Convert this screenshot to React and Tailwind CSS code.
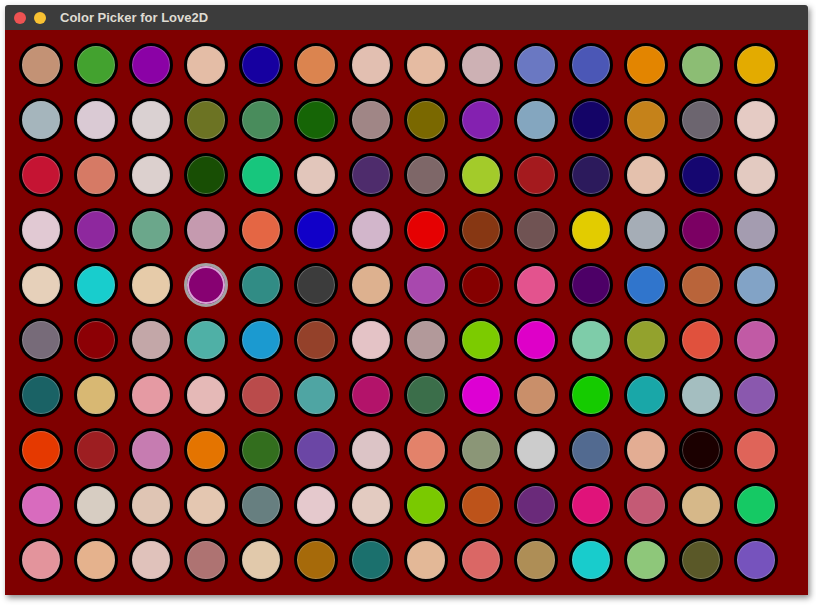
import React from 'react';

// 14 x 10 swatches, row by row
const COLORS = [
  ['#c39275', '#43a22f', '#8b02a6', '#e4bda6', '#1600a0', '#db844f', '#e2bfb1', '#e5bba2', '#cdb1b4', '#6a78c2', '#4b57b6', '#e38500', '#8cbd74', '#e3ab00'],
  ['#a5b5bc', '#dacad4', '#dad1d2', '#6c7323', '#498c5c', '#166506', '#a08686', '#7a6800', '#8421b0', '#84a6bf', '#140467', '#c5821a', '#6c656f', '#e5cbc4'],
  ['#c51433', '#d67a65', '#dcd0ce', '#184e04', '#17c67d', '#e2c6bb', '#4e2c6c', '#7e6768', '#a3cb2a', '#a41a1e', '#2c1a5c', '#e4c1ad', '#150670', '#e3cac1'],
  ['#e1c9d3', '#8e289e', '#6ba78b', '#c59aaf', '#e46644', '#1100c8', '#d2b6cb', '#e50102', '#873713', '#705353', '#e2cc00', '#a5adb6', '#7b0063', '#a49cb0'],
  ['#e6d0ba', '#18cdcd', '#e6cba9', '#870172', '#318c85', '#3c3c3c', '#ddb18f', '#a848ae', '#850000', '#e3538e', '#4d0067', '#3075cc', '#b9643a', '#82a3c6'],
  ['#776b79', '#8c0005', '#c3a7a8', '#4fb0a6', '#1b9ad0', '#94412a', '#e4c3c6', '#b2999a', '#7ccb00', '#de00c8', '#7ecca9', '#93a22d', '#e0513d', '#c15aa5'],
  ['#1a6265', '#d8b873', '#e59aa3', '#e5b9b7', '#ba4b4b', '#4fa5a3', '#b3136a', '#3b6e4a', '#dd00d3', '#c98f6a', '#15cb00', '#19a7a8', '#a4bec0', '#8a58ae'],
  ['#e53900', '#9d1e21', '#c67cb1', '#e47400', '#336e1e', '#6b46a5', '#dcc4c6', '#e3826a', '#8b9677', '#cccccc', '#526a90', '#e3ad93', '#1b0000', '#df6459'],
  ['#d86bbe', '#d7cdc2', '#dfc5b4', '#e4c7b1', '#677f80', '#e5c9cd', '#e3cbc1', '#7ac900', '#bd531a', '#6a2a7a', '#e0137a', '#c45a75', '#d6b889', '#15c964'],
  ['#e3949c', '#e5b28d', '#e0c2bb', '#ae7372', '#e1c9ab', '#a66a0a', '#1b706d', '#e3b897', '#da6765', '#ae8e56', '#18cccc', '#8ec77a', '#5a5828', '#7653bd'],
];

const SELECTED = [4, 3];

function Swatch({ color, selected }) {
  if (selected) {
    return (
      <div
        className="w-[44px] h-[44px] rounded-full border-[3px] border-[#a3a3a3] shadow-[inset_0_0_0_2px_#d9a3d6]"
        style={{ backgroundColor: color }}
      />
    );
  }
  return (
    <div
      className="w-[44px] h-[44px] rounded-full border-[3px] border-black shadow-[inset_0_0_0_1px_rgba(190,190,190,0.35)]"
      style={{ backgroundColor: color }}
    />
  );
}

export default function App() {
  return (
    <div className="w-[816px] h-[605px] bg-white pl-[5px] pt-[5px] overflow-hidden">
      <div className="w-[803px] h-[590px] flex flex-col shadow-[2px_3px_6px_rgba(0,0,0,0.45)]">
        <div className="h-[25px] bg-[#3c3c3c] flex items-center rounded-t-[3px]">
          <span className="ml-[9px] w-[12px] h-[12px] rounded-full bg-[#ee5252]" />
          <span className="ml-[8px] w-[12px] h-[12px] rounded-full bg-[#f8c132]" />
          <span
            className="ml-[14px] text-[13px] font-bold text-[#dfdbd2]"
            style={{ fontFamily: '"Liberation Sans", Arial, sans-serif' }}
          >
            Color Picker for Love2D
          </span>
        </div>
        <div className="flex-1 bg-[#7f0000] pl-[14px] pt-[13px] flex flex-col gap-[11px]">
          {COLORS.map((row, j) => (
            <div key={j} className="flex gap-[11px]">
              {row.map((c, i) => (
                <Swatch key={i} color={c} selected={j === SELECTED[0] && i === SELECTED[1]} />
              ))}
            </div>
          ))}
        </div>
      </div>
    </div>
  );
}
